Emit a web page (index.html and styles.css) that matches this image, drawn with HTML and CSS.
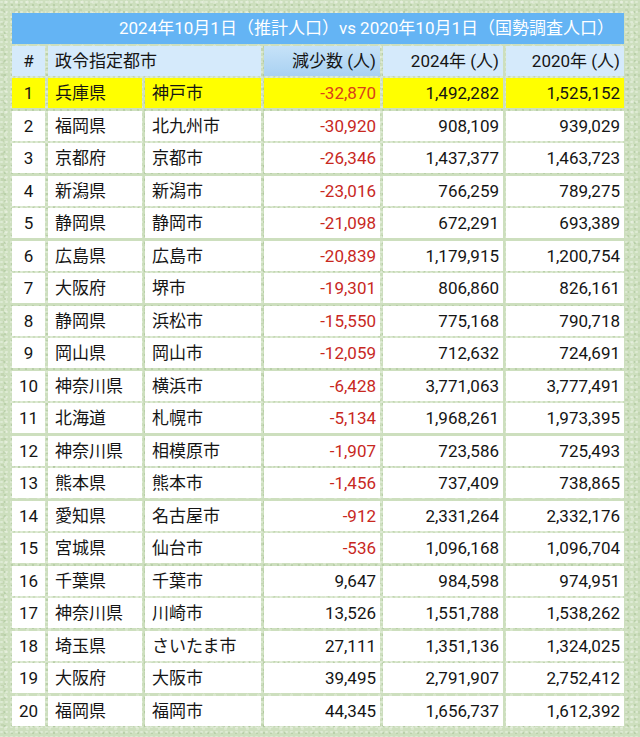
FILE: index.html
```html
<!DOCTYPE html>
<html lang="ja">
<head>
<meta charset="utf-8">
<link rel="stylesheet" href="styles.css">
</head>
<body>
<div class="page">
  <div class="table">
    <div class="title">2024年10月1日（推計人口）vs 2020年10月1日（国勢調査人口）</div>
    <div class="h c">#</div>
    <div class="h l span2">政令指定都市</div>
    <div class="h r sorted">減少数 (人)</div>
    <div class="h r">2024年 (人)</div>
    <div class="h r">2020年 (人)</div>

    <div class="c hl">1</div><div class="l hl">兵庫県</div><div class="l hl">神戸市</div><div class="r hl neg">-32,870</div><div class="r hl">1,492,282</div><div class="r hl">1,525,152</div>
    <div class="c">2</div><div class="l">福岡県</div><div class="l">北九州市</div><div class="r neg">-30,920</div><div class="r">908,109</div><div class="r">939,029</div>
    <div class="c">3</div><div class="l">京都府</div><div class="l">京都市</div><div class="r neg">-26,346</div><div class="r">1,437,377</div><div class="r">1,463,723</div>
    <div class="c">4</div><div class="l">新潟県</div><div class="l">新潟市</div><div class="r neg">-23,016</div><div class="r">766,259</div><div class="r">789,275</div>
    <div class="c">5</div><div class="l">静岡県</div><div class="l">静岡市</div><div class="r neg">-21,098</div><div class="r">672,291</div><div class="r">693,389</div>
    <div class="c">6</div><div class="l">広島県</div><div class="l">広島市</div><div class="r neg">-20,839</div><div class="r">1,179,915</div><div class="r">1,200,754</div>
    <div class="c">7</div><div class="l">大阪府</div><div class="l">堺市</div><div class="r neg">-19,301</div><div class="r">806,860</div><div class="r">826,161</div>
    <div class="c">8</div><div class="l">静岡県</div><div class="l">浜松市</div><div class="r neg">-15,550</div><div class="r">775,168</div><div class="r">790,718</div>
    <div class="c">9</div><div class="l">岡山県</div><div class="l">岡山市</div><div class="r neg">-12,059</div><div class="r">712,632</div><div class="r">724,691</div>
    <div class="c">10</div><div class="l">神奈川県</div><div class="l">横浜市</div><div class="r neg">-6,428</div><div class="r">3,771,063</div><div class="r">3,777,491</div>
    <div class="c">11</div><div class="l">北海道</div><div class="l">札幌市</div><div class="r neg">-5,134</div><div class="r">1,968,261</div><div class="r">1,973,395</div>
    <div class="c">12</div><div class="l">神奈川県</div><div class="l">相模原市</div><div class="r neg">-1,907</div><div class="r">723,586</div><div class="r">725,493</div>
    <div class="c">13</div><div class="l">熊本県</div><div class="l">熊本市</div><div class="r neg">-1,456</div><div class="r">737,409</div><div class="r">738,865</div>
    <div class="c">14</div><div class="l">愛知県</div><div class="l">名古屋市</div><div class="r neg">-912</div><div class="r">2,331,264</div><div class="r">2,332,176</div>
    <div class="c">15</div><div class="l">宮城県</div><div class="l">仙台市</div><div class="r neg">-536</div><div class="r">1,096,168</div><div class="r">1,096,704</div>
    <div class="c">16</div><div class="l">千葉県</div><div class="l">千葉市</div><div class="r">9,647</div><div class="r">984,598</div><div class="r">974,951</div>
    <div class="c">17</div><div class="l">神奈川県</div><div class="l">川崎市</div><div class="r">13,526</div><div class="r">1,551,788</div><div class="r">1,538,262</div>
    <div class="c">18</div><div class="l">埼玉県</div><div class="l">さいたま市</div><div class="r">27,111</div><div class="r">1,351,136</div><div class="r">1,324,025</div>
    <div class="c">19</div><div class="l">大阪府</div><div class="l">大阪市</div><div class="r">39,495</div><div class="r">2,791,907</div><div class="r">2,752,412</div>
    <div class="c">20</div><div class="l">福岡県</div><div class="l">福岡市</div><div class="r">44,345</div><div class="r">1,656,737</div><div class="r">1,612,392</div>
  </div>
</div>
</body>
</html>
```

FILE: styles.css
```css
html, body {
  margin: 0;
  padding: 0;
}
body {
  width: 640px;
  height: 737px;
  overflow: hidden;
  background-color: #cddfbe;
  background-image:
    radial-gradient(circle at 30% 40%, rgba(255,255,255,0.35) 0 1px, transparent 1.5px),
    radial-gradient(circle at 70% 70%, rgba(150,180,130,0.35) 0 1px, transparent 1.5px),
    radial-gradient(circle at 50% 20%, rgba(255,255,255,0.25) 0 1.5px, transparent 2px),
    radial-gradient(circle at 20% 80%, rgba(160,185,140,0.25) 0 1.5px, transparent 2px);
  background-size: 5px 5px, 7px 7px, 11px 11px, 13px 13px;
  font-family: Roboto, "Noto Sans CJK JP", sans-serif;
  color: #151515;
}
.page {
  padding: 13px 0 0 12px;
}
.table {
  display: grid;
  grid-template-columns: 33px 94px 116px 116px 120px 118px;
  grid-auto-rows: 30px;
  column-gap: 3px;
  row-gap: 2.5px;
  width: 612px;
}
.table > div {
  background: #ffffff;
  font-size: 17px;
  line-height: 30px;
  white-space: nowrap;
  overflow: hidden;
}
.table > .title {
  grid-column: 1 / -1;
  background: #64b4f4;
  color: #ffffff;
  text-align: right;
  padding-right: 10px;
  height: 31px;
  line-height: 31px;
  margin-bottom: 1px;
}
.table > .h {
  background: #d5eafb;
}
.table > .sorted {
  background: linear-gradient(#c6e2f8, #a9d1f2);
}
.span2 {
  grid-column: span 2;
}
.c {
  text-align: center;
}
.l {
  padding-left: 7px;
}
.r {
  text-align: right;
  padding-right: 4px;
}
.table > .hl {
  background: #ffff00;
}
.neg {
  color: #c8281e;
}
.table > .hl.neg {
  color: #d9401a;
}
```
